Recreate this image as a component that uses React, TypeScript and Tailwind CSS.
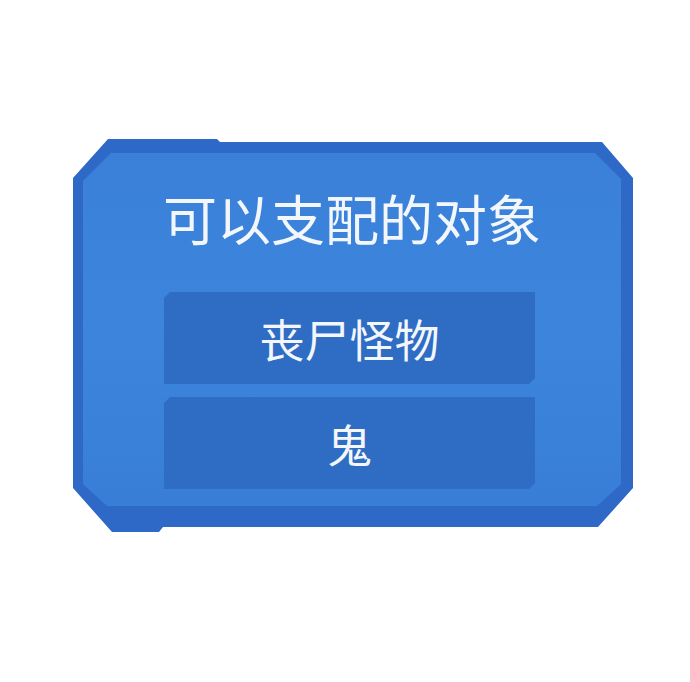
export default function App() {
  const targets = ["丧尸怪物", "鬼"];

  return (
    <div className="h-[682px] w-[690px] bg-white pl-[73px] pt-[139px] font-['Noto_Sans_CJK_SC','Noto_Sans',sans-serif]">
      {/* Chamfered panel: dark rim + lighter face */}
      <div className="h-[393px] w-[560px] bg-[#2e69c8] pb-[26px] pl-[10px] pr-[12px] pt-[14px] [clip-path:polygon(35px_0,144px_0,147px_3px,529px_3px,560px_39px,560px_349px,525px_388px,90px_388px,86px_393px,39px_393px,0_349px,0_39px)]">
        <div className="flex h-full flex-col items-center bg-linear-to-b from-[#3a80d9] via-[#3d85dc] to-[#387ed7] pt-[38px] [clip-path:polygon(28px_0,calc(100%-26px)_0,100%_26px,100%_calc(100%-22px),calc(100%-24px)_100%,24px_100%,0_calc(100%-22px),0_28px)]">
          <h1 className="text-[54px] leading-[54px] font-normal text-[#f3f7fc]">可以支配的对象</h1>
          <div className="mr-[5px] mt-[47px] flex w-[371px] flex-col gap-[13px]">
            {targets.map((t) => (
              <div
                key={t}
                className="flex h-[92px] items-center justify-center bg-[#2f6cc3] [clip-path:polygon(6px_0,100%_0,100%_calc(100%-6px),calc(100%-6px)_100%,0_100%,0_6px)]"
              >
                <span className="text-[45px] leading-none text-[#f3f7fc]">{t}</span>
              </div>
            ))}
          </div>
        </div>
      </div>
    </div>
  );
}
